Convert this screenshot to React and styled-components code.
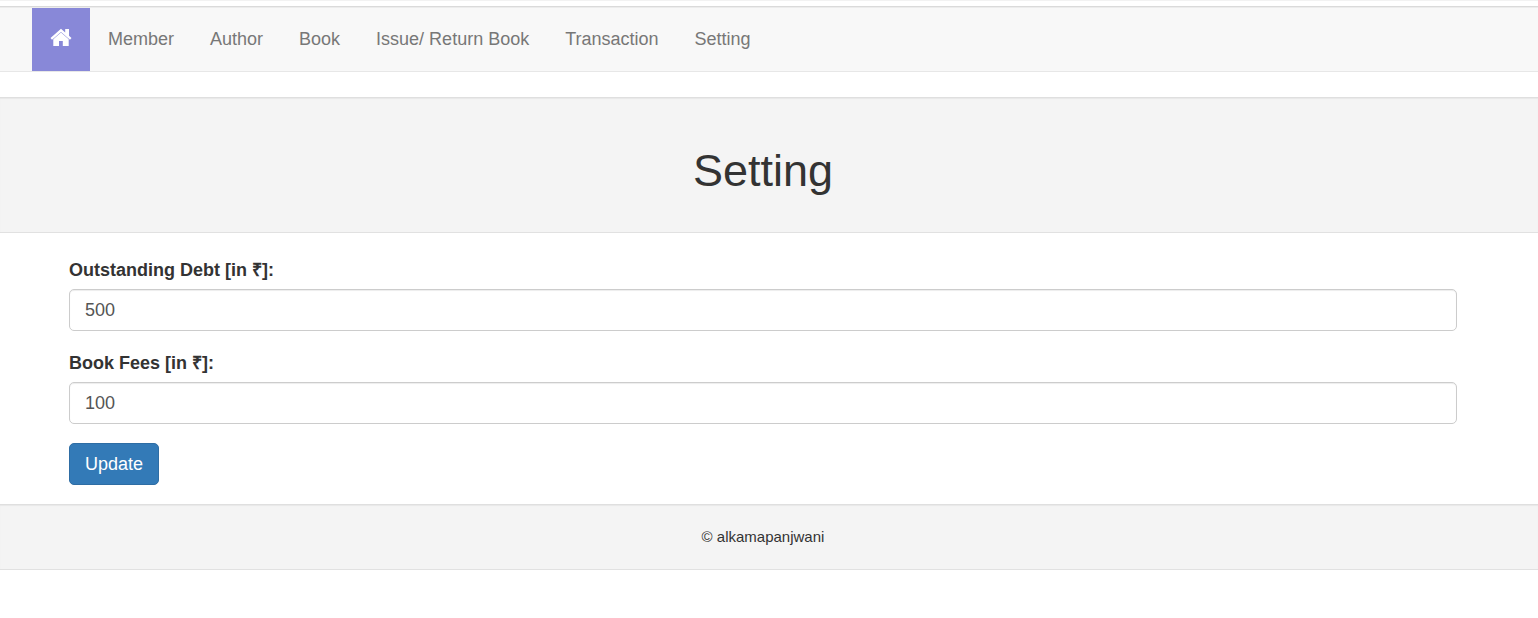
import React from "react";
import styled, { createGlobalStyle } from "styled-components";

const GlobalStyle = createGlobalStyle`
  *, *::before, *::after { box-sizing: border-box; }
  body {
    margin: 0;
    background: #fff;
    color: #333;
    font-family: "Liberation Sans", Arial, sans-serif;
    font-size: 18px;
    line-height: 25px;
  }
`;

const TopRule = styled.div`
  border-top: 1px solid #f2f2f2;
  padding-bottom: 5px;
`;

const Navbar = styled.nav`
  background: #f8f8f8;
  border-top: 1px solid #dadada;
  border-bottom: 1px solid #e7e7e7;
  box-shadow: inset 0 1px 0 #ececec;
  margin-bottom: 25px;
  padding: 1px 32px 0;
`;

const NavList = styled.ul`
  display: flex;
  flex-wrap: wrap;
  list-style: none;
  margin: 0;
  padding: 0;
`;

const NavLink = styled.a`
  display: block;
  height: 63px;
  padding: 19px 18px;
  color: #777;
  text-decoration: none;
`;

const HomeLink = styled(NavLink)`
  background: #8888d8;
`;

const HomeSvg = styled.svg`
  display: block;
  width: 22px;
  height: 24px;
`;

const Band = styled.div`
  background: #f4f4f4;
  border-top: 1px solid #dfdfdf;
  border-bottom: 1px solid #e1e1e1;
  box-shadow: inset 0 1px 1px #e8e8e8;
  padding: ${(p) => (p.$tall ? "48px 12px 36px 0" : "19px 12px 20px 0")};
  text-align: center;
`;

const Title = styled.h1`
  margin: 0;
  font-size: 45px;
  font-weight: 400;
  line-height: 50px;
`;

const Form = styled.form`
  padding: 25px 81px 19px 69px;
`;

const Field = styled.div`
  margin-bottom: 20px;

  &:last-of-type {
    margin-bottom: 19px;
  }
`;

const Label = styled.label`
  display: block;
  margin-bottom: 6px;
  font-weight: 700;
`;

const Input = styled.input`
  display: block;
  width: 100%;
  height: 42px;
  padding: 0 15px;
  border: 1px solid #ccc;
  border-radius: 5px;
  background: #fff;
  box-shadow: inset 0 1px 1px rgba(0, 0, 0, 0.075);
  color: #555;
  font: inherit;
`;

const Button = styled.button`
  display: block;
  height: 42px;
  padding: 0 15px;
  border: 1px solid #2e6da4;
  border-radius: 5px;
  background: #337ab7;
  color: #fff;
  font: inherit;
  cursor: pointer;
`;

const Copyright = styled.p`
  margin: 0;
  font-size: 15px;
`;

function HomeIcon() {
  return (
    <HomeSvg viewBox="0 0 22 24" fill="#fff" aria-hidden="true">
      <path d="M11 1.800L0.500 11l1.500 1.700L11 4.900l9 7.800 1.500-1.700L19 8.800V2h-3.800v3.500z" />
      <path d="M11 5.600L3.300 12.300V19H9v-5h3.800v5H18.700v-6.700z" />
    </HomeSvg>
  );
}

const links = ["Member", "Author", "Book", "Issue/ Return Book", "Transaction", "Setting"];

const fields = [
  { id: "debt", label: "Outstanding Debt [in ₹]:", value: "500" },
  { id: "fees", label: "Book Fees [in ₹]:", value: "100" },
];

export default function App() {
  return (
    <>
      <GlobalStyle />
      <TopRule />
      <Navbar>
        <NavList>
          <li>
            <HomeLink href="#home" aria-label="Home">
              <HomeIcon />
            </HomeLink>
          </li>
          {links.map((name) => (
            <li key={name}>
              <NavLink href="#">{name}</NavLink>
            </li>
          ))}
        </NavList>
      </Navbar>
      <Band as="header" $tall>
        <Title>Setting</Title>
      </Band>
      <Form onSubmit={(e) => e.preventDefault()}>
        {fields.map((f) => (
          <Field key={f.id}>
            <Label htmlFor={f.id}>{f.label}</Label>
            <Input id={f.id} type="text" defaultValue={f.value} />
          </Field>
        ))}
        <Button type="submit">Update</Button>
      </Form>
      <Band as="footer">
        <Copyright>© alkamapanjwani</Copyright>
      </Band>
    </>
  );
}
